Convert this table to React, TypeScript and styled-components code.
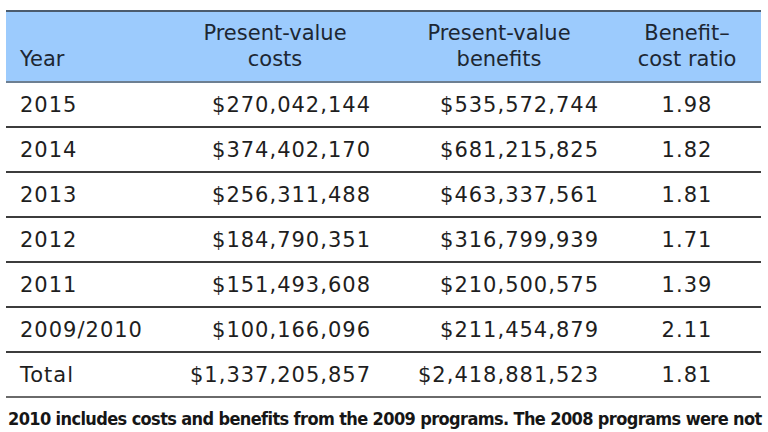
import React from "react";
import styled, { createGlobalStyle } from "styled-components";

const Global = createGlobalStyle`
  html, body { margin: 0; padding: 0; background: #ffffff; }
  body { width: 768px; height: 432px; overflow: hidden; }
`;

const Page = styled.div`
  width: 768px;
  height: 432px;
  overflow: hidden;
  padding-top: 10px;
  box-sizing: border-box;
  background: #fff;
`;

const Table = styled.table`
  margin-left: 6px;
  width: 755px;
  border-collapse: collapse;
  table-layout: fixed;
  font-family: "DejaVu Sans", "Liberation Sans", sans-serif;
  font-size: 21px;
  color: #1e1e1e;
`;

const HeadRow = styled.tr`
  background: #9ccbfd;
  border-top: 2px solid #4b5c6e;
  border-bottom: 2px solid #6d7f92;
`;

const Th = styled.th<{ $align: "left" | "center"; $pl?: number; $pr?: number }>`
  font-weight: normal;
  color: #1d2733;
  line-height: 26px;
  padding: 8px ${(p) => p.$pr ?? 0}px 9px ${(p) => p.$pl ?? 0}px;
  text-align: ${(p) => p.$align};
  vertical-align: bottom;
`;

const Row = styled.tr<{ $last?: boolean }>`
  border-bottom: 2px solid ${(p) => (p.$last ? "#6a6a6a" : "#3c3c3c")};
`;

const Td = styled.td<{ $align: "left" | "right" | "center"; $pl?: number; $pr?: number }>`
  height: 43px;
  padding: 0 ${(p) => p.$pr ?? 0}px 0 ${(p) => p.$pl ?? 0}px;
  text-align: ${(p) => p.$align};
  vertical-align: middle;
  white-space: nowrap;
  letter-spacing: 1px;
`;

const Note = styled.div`
  margin-top: 10px;
  padding-left: 8px;
  font-family: "DejaVu Sans", sans-serif;
  font-stretch: condensed;
  font-weight: bold;
  font-size: 18px;
  color: #161616;
  white-space: nowrap;
  letter-spacing: -0.62px;
`;

const rows = [
  ["2015", "$270,042,144", "$535,572,744", "1.98"],
  ["2014", "$374,402,170", "$681,215,825", "1.82"],
  ["2013", "$256,311,488", "$463,337,561", "1.81"],
  ["2012", "$184,790,351", "$316,799,939", "1.71"],
  ["2011", "$151,493,608", "$210,500,575", "1.39"],
  ["2009/2010", "$100,166,096", "$211,454,879", "2.11"],
  ["Total", "$1,337,205,857", "$2,418,881,523", "1.81"],
];

export default function App() {
  return (
    <Page>
      <Global />
      <Table>
        <colgroup>
          <col style={{ width: 174 }} />
          <col style={{ width: 205 }} />
          <col style={{ width: 228 }} />
          <col style={{ width: 148 }} />
        </colgroup>
        <thead>
          <HeadRow>
            <Th $align="left" $pl={14}>Year</Th>
            <Th $align="center" $pr={15}>Present-value<br />costs</Th>
            <Th $align="center" $pl={15} $pr={15}>Present-value<br />benefits</Th>
            <Th $align="center">Benefit–<br />cost ratio</Th>
          </HeadRow>
        </thead>
        <tbody>
          {rows.map((r, i) => (
            <Row key={r[0]} $last={i === rows.length - 1}>
              <Td $align="left" $pl={14}>{r[0]}</Td>
              <Td $align="right" $pr={14}>{r[1]}</Td>
              <Td $align="right" $pr={14}>{r[2]}</Td>
              <Td $align="center">{r[3]}</Td>
            </Row>
          ))}
        </tbody>
      </Table>
      <Note>2010 includes costs and benefits from the 2009 programs. The 2008 programs were not</Note>
    </Page>
  );
}
